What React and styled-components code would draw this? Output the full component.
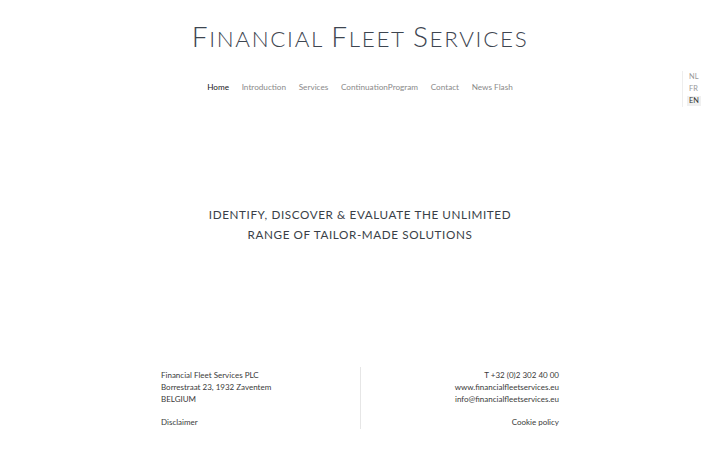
import React from "react";
import styled, { createGlobalStyle } from "styled-components";

const Global = createGlobalStyle`
  html, body {
    margin: 0;
    padding: 0;
    background: #fff;
    font-family: Lato, "Open Sans", sans-serif;
  }
`;

const Page = styled.div`
  position: relative;
  width: 720px;
  height: 450px;
  display: flex;
  flex-direction: column;
  align-items: center;
  overflow: hidden;
`;

const Title = styled.h1`
  margin: 22px 0 0;
  height: 34px;
  font-size: 22.4px;
  font-weight: 300;
  text-transform: uppercase;
  letter-spacing: 1.7px;
  color: #3d4550;
  line-height: 34px;
  white-space: nowrap;
`;

const Initial = styled.span`
  font-size: 28px;
  line-height: 1;
`;

const Nav = styled.nav`
  display: flex;
  gap: 12.6px;
  margin-top: 25px;
`;

const NavLink = styled.a`
  font-size: 8.2px;
  color: ${(p) => (p.active ? "#222" : "#8a8a8a")};
  text-decoration: none;
  line-height: 12px;
`;

const Lang = styled.div`
  position: absolute;
  top: 71px;
  left: 682px;
  display: flex;
  flex-direction: column;
  gap: 2px;
  border-left: 1px solid #eee;
  padding: 1px 0 1px 4px;
`;

const LangItem = styled.span`
  font-size: 7.4px;
  line-height: 10px;
  padding: 0 2px;
  color: ${(p) => (p.active ? "#333" : "#999")};
  background: ${(p) => (p.active ? "#f0f0f0" : "transparent")};
`;

const Headline = styled.h2`
  margin: 111px 0 0;
  font-size: 11.7px;
  font-weight: 400;
  letter-spacing: 0.6px;
  line-height: 20px;
  color: #3a3f48;
  text-align: center;
  text-transform: uppercase;
`;

const Footer = styled.footer`
  margin-top: 123px;
  width: 398px;
  display: grid;
  grid-template-columns: 1fr 1px 1fr;
`;

const Col = styled.div`
  display: flex;
  flex-direction: column;
  align-items: ${(p) => (p.right ? "flex-end" : "flex-start")};
  padding: 2px 0 0;
`;

const Divider = styled.div`
  background: #e6e6e6;
  height: 62px;
`;

const Line = styled.span`
  font-size: 8px;
  line-height: 12px;
  color: #3a3a3a;
`;

const Gap = styled.div`
  height: 11px;
`;

export default function App() {
  const links = ["Home", "Introduction", "Services", "ContinuationProgram", "Contact", "News Flash"];
  const words = ["Financial", "Fleet", "Services"];
  return (
    <>
      <Global />
      <Page>
        <Title>
          {words.map((w, i) => (
            <React.Fragment key={w}>
              {i > 0 && " "}
              <Initial>{w[0]}</Initial>
              {w.slice(1)}
            </React.Fragment>
          ))}
        </Title>
        <Nav>
          {links.map((l, i) => (
            <NavLink key={l} active={i === 0}>
              {l}
            </NavLink>
          ))}
        </Nav>
        <Lang>
          <LangItem>NL</LangItem>
          <LangItem>FR</LangItem>
          <LangItem active>EN</LangItem>
        </Lang>
        <Headline>
          Identify, discover &amp; evaluate the unlimited
          <br />
          range of tailor-made solutions
        </Headline>
        <Footer>
          <Col>
            <Line>Financial Fleet Services PLC</Line>
            <Line>Borrestraat 23, 1932 Zaventem</Line>
            <Line>BELGIUM</Line>
            <Gap />
            <Line>Disclaimer</Line>
          </Col>
          <Divider />
          <Col right>
            <Line>T +32 (0)2 302 40 00</Line>
            <Line>www.financialfleetservices.eu</Line>
            <Line>info@financialfleetservices.eu</Line>
            <Gap />
            <Line>Cookie policy</Line>
          </Col>
        </Footer>
      </Page>
    </>
  );
}
